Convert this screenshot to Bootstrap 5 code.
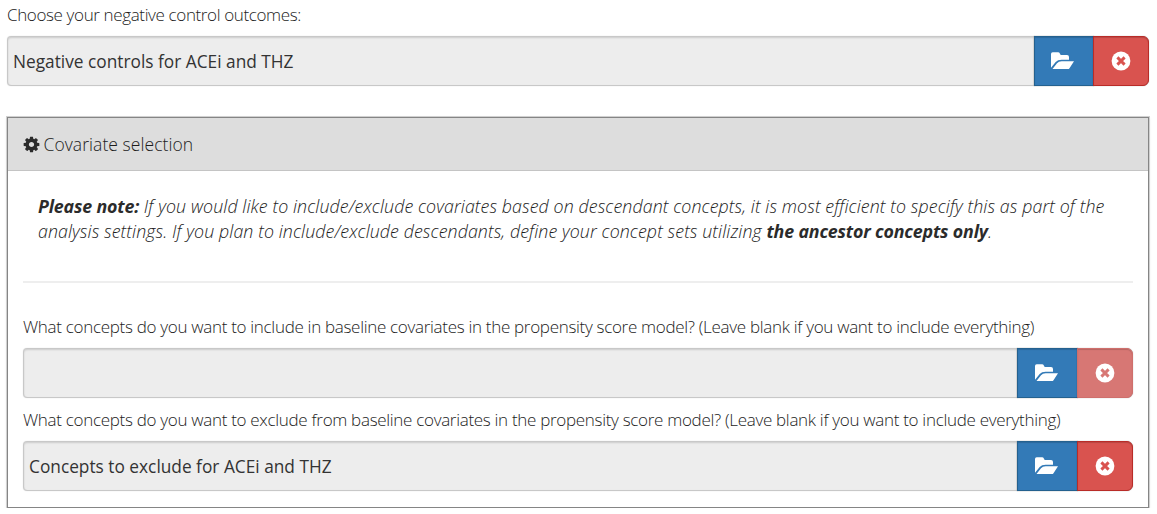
<!DOCTYPE html>
<html lang="en">
<head>
<meta charset="utf-8">
<meta name="viewport" content="width=device-width, initial-scale=1">
<title>Covariate selection</title>
<link href="https://cdn.jsdelivr.net/npm/bootstrap@5.3.0/dist/css/bootstrap.min.css" rel="stylesheet">
<style>
body{font-family:"Open Sans","Noto Sans",sans-serif;font-size:17px;font-weight:300;color:#1c1c1c;background:#fff;overflow:hidden;line-height:25px}
.page{padding:2px 8px 0 7px}
.field-label{display:block;height:25px;margin-bottom:9px;white-space:nowrap;letter-spacing:-.305px}
.page>.field-label{letter-spacing:-.37px}
.note span{white-space:nowrap}
.picker{height:51px}
.picker .form-control{height:50px;padding:0 5px;font-size:17.3px;font-weight:400;color:#333;background:#ededed;border:1px solid #c8c8c8;border-radius:4px 0 0 4px;box-shadow:inset 0 1px 2px rgba(0,0,0,.14),0 0 1px rgba(0,0,0,.2)}
.picker .btn{display:flex;align-items:center;justify-content:center;height:50px;padding:0 3px 1px 0;border-width:1px;box-shadow:inset 0 1px 1px rgba(0,0,0,.15),0 0 1px rgba(0,0,0,.4)}
.btn-open{width:60px;background:#337ab7;border-color:#24618f}
.card-body .btn-open{width:61px}
.picker .btn-clear{width:56px;padding-right:0;background:#d9534f;border-color:#b92c28;border-radius:0 6px 6px 0}
.card-body .picker .btn-clear{padding-right:1px}
.picker .btn-clear:disabled{background:#d77774;border-color:#cf6f6c;opacity:1}
.panel-box{margin-top:30px;height:391px;border:1px solid #858585;border-radius:0;outline:1px solid #d0d0d0;outline-offset:0;box-shadow:0 1px 3px rgba(0,0,0,.12)}
.panel-box .card-header{height:53px;padding:0 15px;font-size:17.5px;letter-spacing:.06px;background:#ddd;border-bottom:1px solid #c4c4c4;border-radius:0;gap:4px}
.panel-box .card-header svg{margin-left:-.5px}
.panel-box .card-body{padding:23px 15px 0}
.note{margin:0 0 0 15px;font-size:17.8px;letter-spacing:.09px;font-style:italic}
.note b{font-weight:700;letter-spacing:-.15px;color:#2b2b2b}
.rule{margin:37px 0 31px;border-top:2px solid #eee;opacity:1}
</style>
</head>
<body>
<main class="page">
  <label class="field-label" for="f1">Choose your negative control outcomes:</label>
  <div class="input-group picker flex-nowrap">
    <input id="f1" class="form-control" value="Negative controls for ACEi and THZ" readonly>
    <button class="btn btn-open" type="button" aria-label="Open"><svg width="23" height="17.4" viewBox="0 0 69 52" fill="#fff"><path d="M0 6Q0 1 5 1H21Q25 1 27 5L29 9H48Q54 9 54 15V23H32Q20 23 14 30L0 47Z"/><path d="M4 51.5L18 34Q23 28 32 28H69L56 48Q54 52 49 52H4Z"/></svg></button>
    <button class="btn btn-clear" type="button" aria-label="Clear"><svg width="20" height="20" viewBox="0 0 20 20"><circle cx="10" cy="10" r="9.4" fill="#fff"/><path d="M6.4 6.4L13.6 13.6M13.6 6.4L6.4 13.6" stroke="#d9534f" stroke-width="2.9"/></svg></button>
  </div>

  <section class="card panel-box">
    <div class="card-header d-flex align-items-center">
      <svg width="17" height="17" viewBox="64 64 1664 1664" fill="#2b2b2b"><path d="M1152 896q0-106-75-181t-181-75-181 75-75 181 75 181 181 75 181-75 75-181zm512-109v222q0 12-8 23t-20 13l-185 28q-19 54-39 91 35 50 107 138 10 12 10 25t-9 23q-27 37-99 108t-94 71q-12 0-26-9l-138-108q-44 23-91 38-16 136-29 186-7 28-36 28h-222q-14 0-24.5-8.5t-11.5-21.5l-28-184q-49-16-90-37l-141 107q-10 9-25 9-14 0-25-11-126-114-165-168-7-10-7-23 0-12 8-23 15-21 51-66.5t54-70.5q-27-50-41-99l-183-27q-13-2-21-12.5t-8-23.5v-222q0-12 8-23t19-13l186-28q14-46 39-92-40-57-107-138-10-12-10-24 0-10 9-23 26-36 98.5-107.5t94.5-71.5q13 0 26 10l138 107q44-23 91-38 16-136 29-186 7-28 36-28h222q14 0 24.5 8.5t11.5 21.5l28 184q49 16 90 37l142-107q9-9 24-9 13 0 25 10 129 119 165 170 7 8 7 22 0 12-8 23-15 21-51 66.5t-54 70.5q26 50 41 98l183 28q13 2 21 12.5t8 23.5z"/></svg>
      <span>Covariate selection</span>
    </div>
    <div class="card-body">
      <p class="note"><span><b>Please note:</b> If you would like to include/exclude covariates based on descendant concepts, it is most efficient to specify this as part of the</span><br><span>analysis settings. If you plan to include/exclude descendants, define your concept sets utilizing <b>the ancestor concepts only</b>.</span></p>
      <hr class="rule">
      <label class="field-label" for="f2">What concepts do you want to include in baseline covariates in the propensity score model? (Leave blank if you want to include everything)</label>
      <div class="input-group picker flex-nowrap">
        <input id="f2" class="form-control" value="" readonly>
        <button class="btn btn-open" type="button" aria-label="Open"><svg width="23" height="17.4" viewBox="0 0 69 52" fill="#fff"><path d="M0 6Q0 1 5 1H21Q25 1 27 5L29 9H48Q54 9 54 15V23H32Q20 23 14 30L0 47Z"/><path d="M4 51.5L18 34Q23 28 32 28H69L56 48Q54 52 49 52H4Z"/></svg></button>
        <button class="btn btn-clear" type="button" aria-label="Clear" disabled><svg width="20" height="20" viewBox="0 0 20 20"><circle cx="10" cy="10" r="9.4" fill="#fff"/><path d="M6.4 6.4L13.6 13.6M13.6 6.4L6.4 13.6" stroke="#d77774" stroke-width="2.9"/></svg></button>
      </div>
      <label class="field-label mt-2" for="f3">What concepts do you want to exclude from baseline covariates in the propensity score model? (Leave blank if you want to include everything)</label>
      <div class="input-group picker flex-nowrap">
        <input id="f3" class="form-control" value="Concepts to exclude for ACEi and THZ" readonly>
        <button class="btn btn-open" type="button" aria-label="Open"><svg width="23" height="17.4" viewBox="0 0 69 52" fill="#fff"><path d="M0 6Q0 1 5 1H21Q25 1 27 5L29 9H48Q54 9 54 15V23H32Q20 23 14 30L0 47Z"/><path d="M4 51.5L18 34Q23 28 32 28H69L56 48Q54 52 49 52H4Z"/></svg></button>
        <button class="btn btn-clear" type="button" aria-label="Clear"><svg width="20" height="20" viewBox="0 0 20 20"><circle cx="10" cy="10" r="9.4" fill="#fff"/><path d="M6.4 6.4L13.6 13.6M13.6 6.4L6.4 13.6" stroke="#d9534f" stroke-width="2.9"/></svg></button>
      </div>
    </div>
  </section>
</main>
<script src="https://cdn.jsdelivr.net/npm/bootstrap@5.3.0/dist/js/bootstrap.bundle.min.js"></script>
</body>
</html>
